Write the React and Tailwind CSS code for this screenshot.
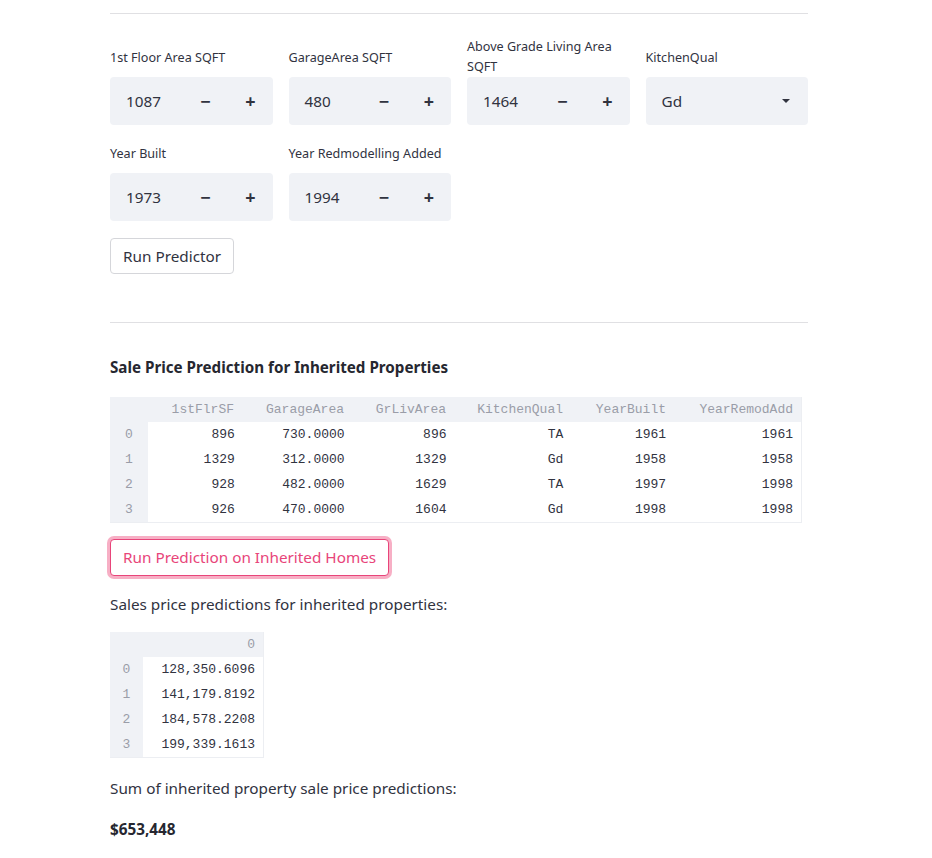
import React from 'react';

const sans = { fontFamily: '"Noto Sans", "Open Sans", sans-serif' };

const NumberInput = ({ label, value, tight }) => (
    <div className="flex flex-col">
        <div className={`text-[12.6px] leading-5 text-[#31333f] ${tight ? '' : 'mb-[9px]'}`}>{label}</div>
        <div className="h-[48px] bg-[#f0f2f6] rounded flex items-center">
            <span className="flex-1 pl-4 text-[15.3px] text-[#31333f]">{value}</span>
            <span className="w-[46px] text-center text-lg font-bold text-[#31333f]">−</span>
            <span className="w-[44px] text-center text-lg font-bold text-[#31333f]">+</span>
        </div>
    </div>
);

const SelectInput = ({ label, value }) => (
    <div className="flex flex-col">
        <div className="text-[12.6px] leading-5 text-[#31333f] mb-[9px]">{label}</div>
        <div className="h-[48px] bg-[#f0f2f6] rounded flex items-center justify-between pl-4 pr-[17px]">
            <span className="text-[15.3px] text-[#31333f]">{value}</span>
            <svg width="10" height="6" viewBox="0 0 10 6">
                <path d="M1 1h8L5 5z" fill="#31333f" />
            </svg>
        </div>
    </div>
);

const columns = [
    { name: '1stFlrSF', w: 'w-[95px]' },
    { name: 'GarageArea', w: 'w-[110px]' },
    { name: 'GrLivArea', w: 'w-[102px]' },
    { name: 'KitchenQual', w: 'w-[117px]' },
    { name: 'YearBuilt', w: 'w-[103px]' },
    { name: 'YearRemodAdd', w: 'w-[127px]' },
];

const rows = [
    ['896', '730.0000', '896', 'TA', '1961', '1961'],
    ['1329', '312.0000', '1329', 'Gd', '1958', '1958'],
    ['928', '482.0000', '1629', 'TA', '1997', '1998'],
    ['926', '470.0000', '1604', 'Gd', '1998', '1998'],
];

const preds = ['128,350.6096', '141,179.8192', '184,578.2208', '199,339.1613'];

const mono = { fontFamily: '"Liberation Mono", "DejaVu Sans Mono", monospace' };

export default function App() {
    return (
        <div className="w-[932px] min-h-[858px] bg-white text-[#31333f]" style={sans}>
            <div className="w-[698px] ml-[110px] pt-[13px] pb-4">
                <div className="border-t border-[#e0e0e3]" />

                {/* Inputs */}
                <div className="grid grid-cols-4 gap-x-4 items-end mt-[23px]">
                    <NumberInput label="1st Floor Area SQFT" value="1087" />
                    <NumberInput label="GarageArea SQFT" value="480" />
                    <NumberInput label="Above Grade Living Area SQFT" value="1464" tight />
                    <SelectInput label="KitchenQual" value="Gd" />
                </div>
                <div className="grid grid-cols-4 gap-x-4 items-end mt-[19px]">
                    <NumberInput label="Year Built" value="1973" />
                    <NumberInput label="Year Redmodelling Added" value="1994" />
                </div>
                <button className="mt-[17px] h-[36px] px-3 border border-[#d5d6da] rounded bg-white text-[15.3px] text-[#31333f]">
                    Run Predictor
                </button>

                <div className="border-t border-[#e0e0e3] mt-[48px]" />

                {/* Inherited */}
                <h3 className="mt-[32px] text-[15.2px] font-bold leading-6 text-[#262730]">
                    Sale Price Prediction for Inherited Properties
                </h3>
                <div className="mt-[18px] w-[692px] border-r border-b border-[#eceef2] text-[13px]" style={mono}>
                    <div className="flex h-[25px] items-center bg-[#f0f2f6] text-[#9a9da8]">
                        <div className="w-[37px]" />
                        {columns.map((c) => (
                            <div key={c.name} className={`${c.w} text-right pr-2`}>{c.name}</div>
                        ))}
                    </div>
                    {rows.map((r, i) => (
                        <div key={i} className="flex h-[25px] items-center">
                            <div className="w-[38px] h-full flex items-center justify-center bg-[#f0f2f6] text-[#9a9da8]">{i}</div>
                            {r.map((v, j) => (
                                <div key={j} className={`${columns[j].w} text-right pr-2 text-[#31333f]`}>{v}</div>
                            ))}
                        </div>
                    ))}
                </div>

                <button className="mt-[16px] h-[37px] px-3 border border-[#e8457a] rounded bg-white text-[15.3px] text-[#e8457a] shadow-[0_0_0_3px_rgba(240,110,150,0.55)]">
                    Run Prediction on Inherited Homes
                </button>

                <p className="mt-[16px] text-[15.3px] leading-6">Sales price predictions for inherited properties:</p>

                <div className="mt-[16px] w-[154px] border-r border-b border-[#eceef2] text-[13px]" style={mono}>
                    <div className="flex h-[25px] items-center bg-[#f0f2f6] text-[#9a9da8]">
                        <div className="w-[33px]" />
                        <div className="flex-1 text-right pr-2">0</div>
                    </div>
                    {preds.map((v, i) => (
                        <div key={i} className="flex h-[25px] items-center">
                            <div className="w-[33px] h-full flex items-center justify-center bg-[#f0f2f6] text-[#9a9da8]">{i}</div>
                            <div className="flex-1 text-right pr-2 text-[#31333f]">{v}</div>
                        </div>
                    ))}
                </div>

                <p className="mt-[18px] text-[15.3px] leading-6">Sum of inherited property sale price predictions:</p>
                <p className="mt-[17px] text-[15.3px] font-bold leading-6 text-[#262730]">$653,448</p>
            </div>
        </div>
    );
}
